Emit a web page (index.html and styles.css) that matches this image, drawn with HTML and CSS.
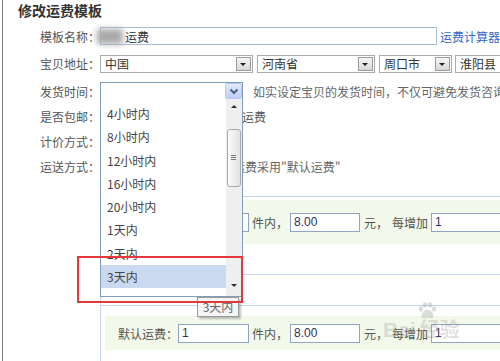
FILE: index.html
```html
<!DOCTYPE html>
<html lang="zh-CN">
<head>
    <meta charset="UTF-8">
    <meta name="viewport" content="width=device-width, initial-scale=1.0">
    <title>修改运费模板</title>
    <link rel="stylesheet" href="styles.css">
</head>
<body>
<div class="page">
    <h2 class="title">修改运费模板</h2>

    <div class="row row-name">
        <span class="label">模板名称：</span>
        <span class="field name-field"><span class="blur"></span>运费</span>
        <a class="calc-link" href="#">运费计算器</a>
    </div>

    <div class="row row-addr">
        <span class="label">宝贝地址：</span>
        <span class="select w-country">中国<i class="arrow"></i></span>
        <span class="select w-prov">河南省<i class="arrow"></i></span>
        <span class="select w-city">周口市<i class="arrow"></i></span>
        <span class="select w-county">淮阳县<i class="arrow"></i></span>
    </div>

    <div class="row row-time">
        <span class="label">发货时间：</span>
        <span class="select select-open">
            <i class="arrow-xp"><svg width="10" height="7" viewBox="0 0 10 7"><polyline points="1.5,1.5 5,5 8.5,1.5" fill="none" stroke="#4a5f86" stroke-width="2"/></svg></i>
            <div class="dropdown">
                <ul class="options">
                    <li>4小时内</li>
                    <li>8小时内</li>
                    <li>12小时内</li>
                    <li>16小时内</li>
                    <li>20小时内</li>
                    <li>1天内</li>
                    <li>2天内</li>
                    <li class="hover">3天内</li>
                </ul>
                <div class="scrollbar">
                    <i class="up"></i>
                    <span class="thumb"><i></i></span>
                    <i class="down"></i>
                </div>
            </div>
        </span>
        <span class="hint">如实设定宝贝的发货时间，不仅可避免发货咨询和纠纷，还能促进成交！</span>
    </div>

    <div class="row row-free">
        <span class="label">是否包邮：</span>
        <span class="behind free-text">运费</span>
    </div>

    <div class="row row-price">
        <span class="label">计价方式：</span>
    </div>

    <div class="row row-ship">
        <span class="label">运送方式：</span>
        <span class="hint behind ship-hint">运费采用"默认运费"</span>
    </div>

    <div class="fee-table">
        <div class="fee-box fee-box-top">
            <input class="num n-first" type="text" value="1">
            <span class="t-unit">件内，</span>
            <input class="num n-price" type="text" value="8.00">
            <span class="t-yuan">元，</span>
            <span class="t-add">每增加</span>
            <input class="num n-last" type="text" value="1">
        </div>
        <div class="sep"></div>
        <div class="sep"></div>
        <div class="fee-box fee-box-low">
            <span>默认运费：</span>
            <input class="num n-first" type="text" value="1">
            <span class="t-unit">件内，</span>
            <input class="num n-price" type="text" value="8.00">
            <span class="t-yuan">元，</span>
            <span class="t-add">每增加</span>
            <input class="num n-last" type="text" value="1">
        </div>
    </div>

    <!-- overlays -->
    <div class="tip">3天内</div>
    <div class="mark-box"></div>
    <div class="watermark">
        <svg class="paw" width="20" height="17" viewBox="0 0 20 17">
            <ellipse cx="4" cy="7" rx="2.2" ry="2.8"/>
            <ellipse cx="8" cy="3" rx="2.2" ry="2.8"/>
            <ellipse cx="13" cy="3" rx="2.2" ry="2.8"/>
            <ellipse cx="17" cy="7" rx="2.2" ry="2.8"/>
            <path d="M10.5 7.5c-3 0-6 4-6 6.5 0 2 2 2.5 3.5 2 1-.3 1.7-.6 2.5-.6s1.5.3 2.5.6c1.5.5 3.5 0 3.5-2 0-2.5-3-6.5-6-6.5z"/>
        </svg>
        <span class="wm-text">Bai<span class="wm-cn">经验</span></span>
    </div>
</div>
</body>
</html>
```

FILE: styles.css
```css
* {
    box-sizing: border-box;
}
html, body {
    margin: 0;
}
body {
    font-family: "Noto Sans CJK SC", "Liberation Sans", sans-serif;
    font-size: 12px;
    color: #4a4a4a;
    background: #fff;
}
.page {
    position: relative;
    width: 498px;
    height: 361px;
    overflow: hidden;
    margin-left: 2px;
    border-left: 1px solid #7c7c7c;
}
.title {
    margin: 0;
    height: 22px;
    padding: 1px 0 0 15px;
    font-size: 14px;
    line-height: 18px;
    font-weight: bold;
    color: #333;
}

/* form rows */
.row {
    display: flex;
    align-items: center;
    white-space: nowrap;
}
.row-name { height: 28px; }
.row-addr { height: 27px; }
.row-time { height: 28px; }
.row-free { height: 23px; }
.row-price { height: 26px; }
.row-ship { height: 25px; }
.label {
    flex: none;
    width: 97px;
    text-align: right;
    color: #555;
}

.field {
    display: flex;
    align-items: center;
    height: 18px;
    border: 1px solid #a9bcda;
    background: #fff;
    color: #333;
}
.name-field {
    width: 347px;
    padding-left: 2px;
}
.blur {
    display: inline-block;
    width: 26px;
    height: 15px;
    margin: 0 2px 0 -6px;
    background: #a8a8a8;
    filter: blur(3px);
}
.calc-link {
    margin-left: 3px;
    color: #3366cc;
    text-decoration: none;
}

/* fake selects */
.select {
    display: flex;
    align-items: center;
    justify-content: space-between;
    flex: none;
    height: 18px;
    padding-left: 4px;
    border: 1px solid #a5acb2;
    background: #fff;
    color: #333;
}
.arrow {
    position: relative;
    width: 15px;
    height: 14px;
    margin-right: 1px;
    border: 1px solid #9a9a9a;
    background: linear-gradient(#f6f6f6, #d8d8d8);
}
.arrow::after {
    content: "";
    position: absolute;
    left: 3px;
    top: 5px;
    border-top: 3px solid #222;
    border-left: 3.5px solid transparent;
    border-right: 3.5px solid transparent;
}
.w-country { width: 153px; margin-right: 4px; }
.w-prov { width: 118px; margin-right: 4px; }
.w-city { width: 73px; margin-right: 3px; }
.w-county { width: 80px; }

.select-open {
    position: relative;
    width: 143px;
    justify-content: flex-end;
    border-color: #7f9db9;
}
.arrow-xp {
    display: flex;
    align-items: center;
    justify-content: center;
    width: 17px;
    height: 16px;
    border: 1px solid #b6c9ef;
    border-radius: 2px;
    background: linear-gradient(#e3ebfd, #bccff8);
}

/* open dropdown list */
.dropdown {
    position: absolute;
    left: -1px;
    top: 16px;
    width: 143px;
    height: 198px;
    border: 1px solid #7f9db9;
    border-top: none;
    background: #fff;
    overflow: hidden;
    z-index: 5;
}
.options {
    list-style: none;
    margin: 3px 16px 0 0;
    padding: 0;
}
.options li {
    height: 23.3px;
    line-height: 23.3px;
    padding-left: 6px;
    color: #444;
}
.options li.hover {
    background: #cad9ef;
}
.scrollbar {
    position: absolute;
    top: 0;
    right: 0;
    bottom: 0;
    width: 16px;
    background: #efefef;
}
.scrollbar .up,
.scrollbar .down {
    position: absolute;
    left: 5px;
    border-left: 3px solid transparent;
    border-right: 3px solid transparent;
}
.scrollbar .up {
    top: 6px;
    border-bottom: 3px solid #333;
}
.scrollbar .down {
    bottom: 9px;
    border-top: 3px solid #333;
}
.thumb {
    position: absolute;
    left: 1px;
    right: 1px;
    top: 30px;
    height: 58px;
    border: 1px solid #a9a9a9;
    border-radius: 3px;
    background: linear-gradient(90deg, #fbfbfb, #e2e2e2);
}
.thumb i {
    position: absolute;
    left: 3px;
    top: 25px;
    width: 5px;
    height: 5px;
    border-top: 1px solid #777;
    border-bottom: 1px solid #777;
}
.thumb i::after {
    content: "";
    position: absolute;
    left: 0;
    top: 1px;
    width: 5px;
    border-top: 1px solid #777;
}

.hint {
    margin-left: 10px;
    color: #666;
}
/* text that runs out from under the open list */
.behind {
    color: #555;
}
.free-text {
    margin-left: 142px;
}
.ship-hint {
    margin-left: 133px;
    color: #666;
}

/* fee table */
.fee-table {
    margin: 17px 0 0 97px;
    height: 170px;
    border-left: 1px solid #c5d4ee;
    border-top: 1px solid #c5d4ee;
}
.fee-box {
    display: flex;
    align-items: center;
    height: 44px;
    margin: 3px 0 0 4px;
    padding-left: 13px;
    background: #f2f9ea;
    color: #555;
    white-space: nowrap;
}
.fee-box-top {
    padding-left: 73px;
}
.fee-box-low {
    height: 34px;
    margin-top: 10px;
}
.sep {
    margin-top: 30px;
    border-top: 1px solid #c5d4ee;
}
.num {
    flex: none;
    height: 19px;
    margin: 0;
    padding: 0 3px;
    border: 1px solid #8fa4c3;
    font-family: "Liberation Sans", sans-serif;
    font-size: 12px;
    color: #30305a;
    background: #fff;
}
.n-first { width: 71px; }
.n-price { width: 70px; margin-left: 2px; }
.n-last { width: 80px; margin-left: 3px; }
.t-unit { margin-left: 3px; }
.t-yuan { margin-left: 4px; }
.t-add { margin-left: 4px; }

/* things drawn over the form */
.tip {
    position: absolute;
    left: 194px;
    top: 297px;
    width: 42px;
    height: 20px;
    border: 1px solid #9a9a9a;
    background: #f5f5f5;
    box-shadow: 2px 2px 2px rgba(0, 0, 0, .25);
    color: #666;
    line-height: 18px;
    text-align: center;
    z-index: 6;
}
.mark-box {
    position: absolute;
    left: 74px;
    top: 256px;
    width: 166px;
    height: 47px;
    border: 2px solid #e4393c;
    z-index: 7;
}
.watermark {
    position: absolute;
    left: 380px;
    top: 302px;
    width: 100px;
    height: 40px;
    z-index: 8;
}
.paw {
    position: absolute;
    left: 34px;
    top: 0;
    fill: rgba(140, 140, 140, .3);
}
.wm-text {
    position: absolute;
    left: 0;
    top: 12px;
    font: bold 21px "Liberation Sans", sans-serif;
    color: rgba(150, 150, 150, .3);
}
.wm-cn {
    margin-left: 4px;
    font-family: "Noto Sans CJK SC", sans-serif;
    font-size: 20px;
}
```
